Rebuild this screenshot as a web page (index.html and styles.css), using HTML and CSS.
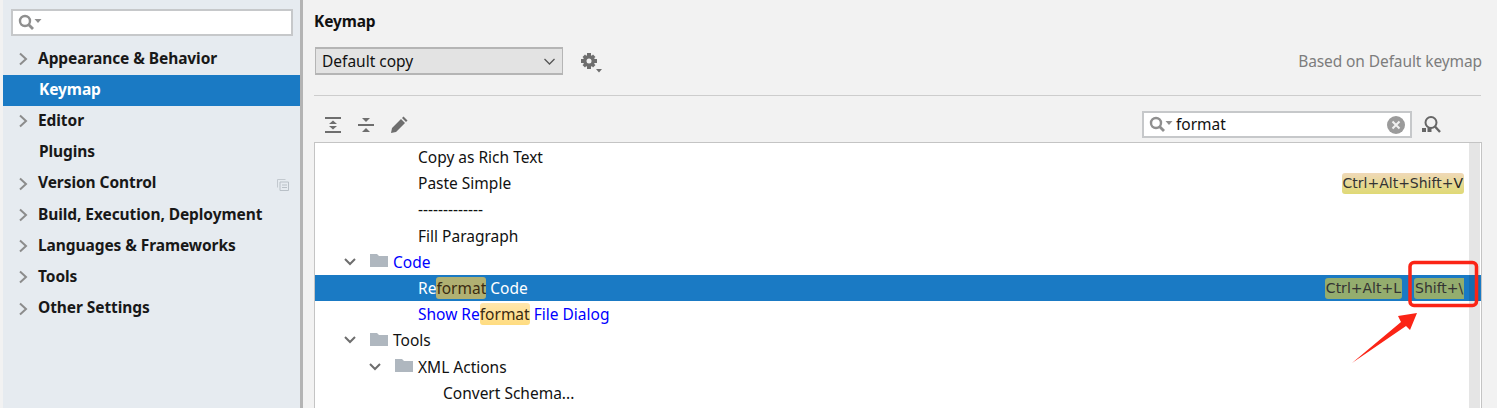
FILE: index.html
```html
<!DOCTYPE html>
<html lang="en">
<head>
<meta charset="utf-8">
<title>Keymap</title>
<link rel="stylesheet" href="styles.css">
</head>
<body>
<svg class="defs" width="0" height="0" aria-hidden="true">
  <defs>
    <symbol id="chev-r" viewBox="0 0 10 14"><path d="M2 1.500 8 7 2 12.500" fill="none" stroke="#8c8c8c" stroke-width="2"/></symbol>
    <symbol id="chev-d" viewBox="0 0 14 10"><path d="M2 2 7 7 12 2" fill="none" stroke="#6e6e6e" stroke-width="2"/></symbol>
    <symbol id="folder" viewBox="0 0 18 13"><path d="M0 0H7L9 2H18V13H0Z" fill="#afb7bf"/></symbol>
    <symbol id="search" viewBox="0 0 24 18"><circle cx="7" cy="7" r="5" fill="none" stroke="#8f8f8f" stroke-width="2.400"/><path d="M10.500 10.500 15 15" stroke="#8f8f8f" stroke-width="2.800"/><path d="M16.500 5H23.500L20 9Z" fill="#8f8f8f"/></symbol>
  </defs>
</svg>
<div class="window">
  <aside class="sidebar">
    <div class="side-search"><svg class="search-ic"><use href="#search"/></svg></div>
    <nav class="side-list">
      <div class="side-item"><svg class="chev"><use href="#chev-r"/></svg>Appearance &amp; Behavior</div>
      <div class="side-item plain selected">Keymap</div>
      <div class="side-item"><svg class="chev"><use href="#chev-r"/></svg>Editor</div>
      <div class="side-item plain">Plugins</div>
      <div class="side-item"><svg class="chev"><use href="#chev-r"/></svg>Version Control
        <svg class="copy-ic" viewBox="0 0 12 12"><path d="M.5 8.500V.5H8.500" fill="none" stroke="#c3c9cf"/><path d="M3 3H11.500V11.500H3Z" fill="none" stroke="#b9c0c7"/><path d="M5 6H10M5 8.500H10" stroke="#b9c0c7"/></svg>
      </div>
      <div class="side-item"><svg class="chev"><use href="#chev-r"/></svg>Build, Execution, Deployment</div>
      <div class="side-item"><svg class="chev"><use href="#chev-r"/></svg>Languages &amp; Frameworks</div>
      <div class="side-item"><svg class="chev"><use href="#chev-r"/></svg>Tools</div>
      <div class="side-item"><svg class="chev"><use href="#chev-r"/></svg>Other Settings</div>
    </nav>
  </aside>
  <main class="content">
    <h1 class="title">Keymap</h1>
    <div class="scheme-row">
      <div class="select">Default copy
        <svg class="select-arrow" viewBox="0 0 12 7"><path d="M1 1 6 6 11 1" fill="none" stroke="#555" stroke-width="1.300"/></svg>
      </div>
      <svg class="gear" viewBox="0 0 22 22">
        <g fill="#6e6e6e"><circle cx="9" cy="9" r="6"/><path d="M7 1h4v3H7zM7 14h4v3H7zM1 7h3v4H1zM14 7h3v4h-3z"/><path d="M2.500 5 5 2.500l2 2-2.500 2.500zM11 4.500l2-2L15.500 5 13 7zM2.500 13 5 11l2 2-2 2.500zM11 13l2-2 2.500 2-2.500 2.500z"/><path d="M16 17h6l-3 3.500z"/></g>
        <circle cx="9" cy="9" r="2.500" fill="#f2f2f2"/>
      </svg>
      <span class="based">Based on Default keymap</span>
    </div>
    <hr class="sep">
    <div class="toolbar">
      <svg class="tool" viewBox="0 0 18 18"><g fill="#6e6e6e"><path d="M1 1h16v2H1zM1 15h16v2H1zM9 4.500l4 3.500H5zM5 10h8l-4 3.500z"/></g></svg>
      <svg class="tool" viewBox="0 0 18 18"><g fill="#6e6e6e"><path d="M1 8h16v2H1zM5 2h8L9 6zM9 12l4 4H5z"/></g></svg>
      <svg class="tool" viewBox="0 0 18 18"><g fill="#6e6e6e"><path d="M1 17l1-5L11 3l4 4-9 9zM12 2l1.500-1.500 4 4L16 6z"/></g></svg>
      <div class="spacer"></div>
      <div class="filter">
        <svg class="search-ic"><use href="#search"/></svg>
        <span class="filter-text">format</span>
        <svg class="clear" viewBox="0 0 18 18"><circle cx="9" cy="9" r="9" fill="#9b9b9b"/><path d="M5.500 5.500l7 7M12.500 5.500l-7 7" stroke="#f0f0f0" stroke-width="2"/></svg>
      </div>
      <svg class="find" viewBox="0 0 20 20"><circle cx="10" cy="7.500" r="5.500" fill="none" stroke="#666" stroke-width="2"/><path d="M14 11.500 19 17" stroke="#666" stroke-width="2.400"/><path d="M1 13h4v4H1zM6.500 13h4v4h-4z" fill="#666"/></svg>
    </div>
    <div class="tree">
      <div class="row lv2"><span class="label">Copy as Rich Text</span></div>
      <div class="row lv2"><span class="label">Paste Simple</span><span class="keys"><span class="key">Ctrl+Alt+Shift+<b>V</b></span></span></div>
      <div class="row lv2"><span class="label">-------------</span></div>
      <div class="row lv2"><span class="label">Fill Paragraph</span></div>
      <div class="row lv1"><svg class="tw"><use href="#chev-d"/></svg><svg class="fold"><use href="#folder"/></svg><span class="label blue">Code</span></div>
      <div class="row lv2 active"><span class="label">Re<span class="hit">format</span> Code</span><span class="keys"><span class="key">Ctrl+Alt+L</span><span class="key cut">Shift+\</span></span></div>
      <div class="row lv2"><span class="label blue">Show Re<span class="hit">format</span> File Dialog</span></div>
      <div class="row lv1"><svg class="tw"><use href="#chev-d"/></svg><svg class="fold"><use href="#folder"/></svg><span class="label">Tools</span></div>
      <div class="row lv1b"><svg class="tw"><use href="#chev-d"/></svg><svg class="fold"><use href="#folder"/></svg><span class="label">XML Actions</span></div>
      <div class="row lv3"><span class="label">Convert Schema...</span></div>
      <div class="scrollbar"></div>
    </div>
  </main>
</div>
<svg class="note" viewBox="0 0 1497 408" aria-hidden="true">
  <rect x="1410" y="262.500" width="66.500" height="43" rx="4" fill="none" stroke="#fb2416" stroke-width="3.500"/>
  <path d="M1352 363 1401 322 1398 316 1417 313 1410 330 1406 326Z" fill="#fb2416"/>
</svg>
</body>
</html>
```

FILE: styles.css
```css
* { box-sizing: border-box; }
html, body { margin: 0; height: 408px; overflow: hidden; }
body { font-family: "Noto Sans", "Open Sans", sans-serif; font-size: 15.500px; color: #111; background: #f2f2f2; position: relative; }
.defs { position: absolute; }
.window { display: flex; height: 408px; padding-left: 3px; overflow: hidden; }

.sidebar { width: 300px; flex: none; background: #e6ebf0; border-right: 3px solid #b4b4b4; padding-top: 9px; }
.side-search { height: 27px; margin: 0 7px 0 8px; background: #fff; border: 2px solid #c6c8ca; display: flex; align-items: center; padding-left: 5px; }
.search-ic { width: 24px; height: 18px; flex: none; }
.side-list { margin-top: 8px; }
.side-item { height: 31.200px; display: flex; align-items: center; padding: 0 0 4px 35px; font-weight: 700; letter-spacing: -.08px; position: relative; color: #181818; }
.side-item.plain { padding-left: 36px; }
.side-item.selected { background: #1a7ac4; color: #fff; }
.chev { position: absolute; left: 15px; top: 8px; width: 10px; height: 14px; }
.copy-ic { position: absolute; left: 274px; top: 10px; width: 12px; height: 12px; }

.content { flex: 1; min-width: 0; padding: 0 15px 0 11px; }
.title { margin: 11px 0 0 0; font-size: 15.500px; line-height: 20px; font-weight: 700; letter-spacing: -.14px; color: #111; }
.scheme-row { display: flex; align-items: center; margin-top: 16px; padding-left: 1px; height: 28px; }
.select { width: 248px; height: 28px; background: #e3e3e3; border: 1px solid #b5b5b5; border-width: 2px 1px; padding-left: 6px; display: flex; align-items: center; position: relative; }
.select-arrow { position: absolute; right: 6px; top: 9px; width: 13px; height: 7px; }
.gear { width: 22px; height: 22px; margin: 4px 0 0 17px; }
.based { margin-left: auto; color: #7d7d7d; letter-spacing: -.1px; }
.sep { border: 0; height: 1px; background: #cdcdcd; margin: 20px 1px 0 0; }
.toolbar { display: flex; align-items: center; height: 29px; margin-top: 14px; padding-left: 10px; }
.tool { width: 18px; height: 18px; margin-right: 15px; }
.spacer { flex: 1; }
.filter { width: 270px; height: 27px; background: #fff; border: 2px solid #c6c8ca; display: flex; align-items: center; padding: 0 5px; }
.filter-text { margin: 0 0 2px 3px; flex: 1; line-height: 20px; }
.clear { width: 18px; height: 18px; }
.find { width: 20px; height: 20px; margin: 0 41px 0 9px; }

.tree { position: relative; height: 266px; margin-top: 3px; background: #fff; border: 1px solid #c4c4c4; border-bottom: 0; padding-top: 1px; overflow: hidden; }
.row { height: 26.200px; display: flex; align-items: center; position: relative; white-space: nowrap; }
.lv1 { padding-left: 28px; }
.lv1b { padding-left: 53px; }
.lv2 { padding-left: 103px; }
.lv3 { padding-left: 128px; }
.tw { width: 14px; height: 10px; flex: none; }
.fold { width: 18px; height: 13px; margin-left: 13px; margin-right: 5px; flex: none; position: relative; top: -1px; }
.blue { color: #0000ff; }
.hit { background: linear-gradient(#ffe6ac, #ffdc80); border-radius: 3px; color: #3a2a10; }
.active { background: #1a7ac4; color: #fff; }
.active .hit { background: #b0b072; }
.keys { position: absolute; right: 17px; top: 3px; display: flex; gap: 12px; }
.key { height: 21px; line-height: 20px; padding: 0 1px; background: linear-gradient(#f0d9b8, #dfd975); border-radius: 3px; color: #333; font-family: "DejaVu Sans", sans-serif; font-size: 14px; }
.key b { font-weight: 400; color: #222; }
.active .key { background: #94ad6e; color: #333; }
.key.cut { width: 50px; overflow: hidden; border-radius: 3px 0 0 3px; }
.scrollbar { position: absolute; left: 1154px; top: 0; bottom: 0; width: 11px; background: rgba(0, 0, 0, .1); }

.note { position: absolute; left: 0; top: 0; width: 1497px; height: 408px; pointer-events: none; }
```
